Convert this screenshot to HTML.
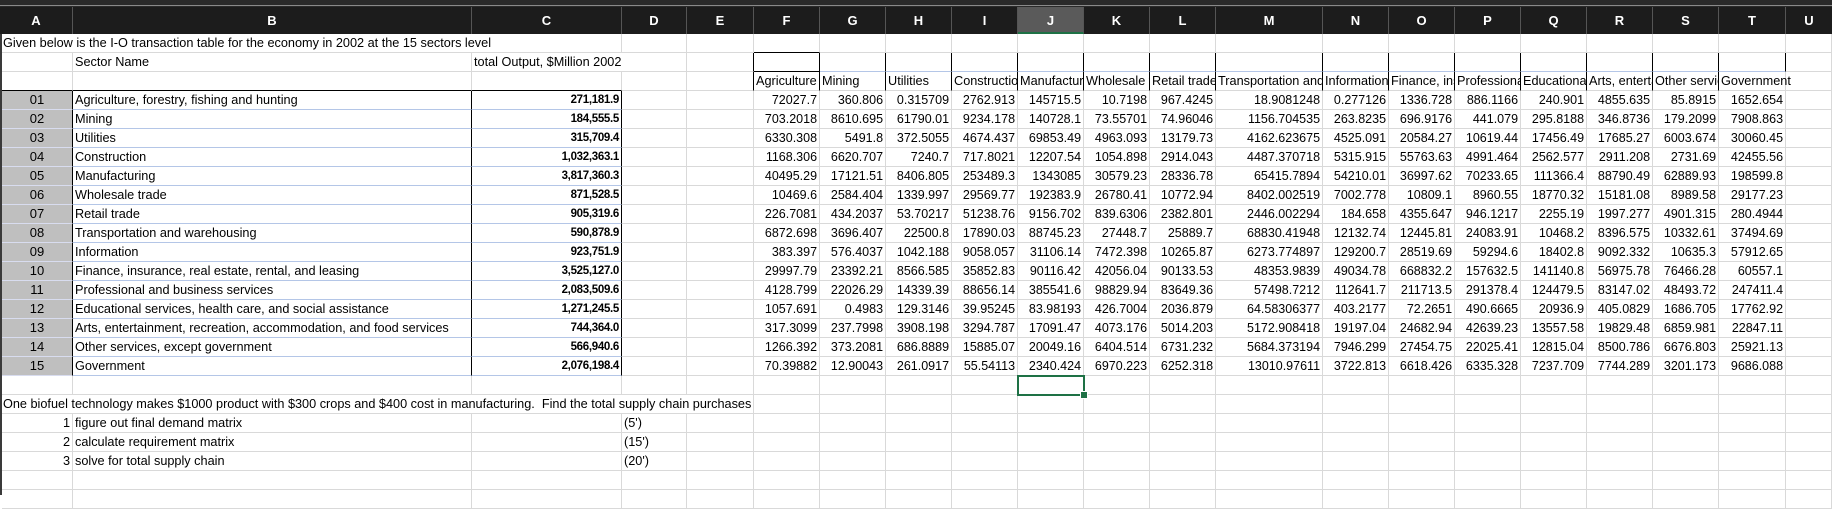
<!DOCTYPE html>
<html><head><meta charset="utf-8"><style>
body{margin:0;width:1832px;height:495px;overflow:hidden;background:#fff;position:relative;font-family:"Liberation Sans",sans-serif}
#top{position:absolute;left:0;top:0;width:1832px;height:7px;background:#2a2a2a;border-bottom:0}
#top i{position:absolute;left:0;top:5px;width:1832px;height:1px;background:#8a8a8a}
#hdr{position:absolute;left:0;top:7px;height:27px;width:1832px;background:#1c1c1c}
#hdr div{position:absolute;top:0;height:27px;line-height:27px;text-align:center;color:#fff;font-weight:bold;font-size:13px;border-right:1px solid #555;box-sizing:border-box}
#lft{position:absolute;left:0;top:34px;width:2px;height:461px;background:#3a3a3a}
table{position:absolute;left:2px;top:34px;border-collapse:separate;border-spacing:0;table-layout:fixed;width:1830px}
tr{height:19px}
td{height:18px;max-height:18px;padding:0 2px;line-height:18px;border-right:1px solid #d9d9d9;border-bottom:1px solid #d9d9d9;white-space:nowrap;overflow:hidden;font-size:12.5px;color:#000;box-sizing:content-box}
.t{font-size:12.7px;letter-spacing:0}
.r{text-align:right}
.b{font-weight:bold;font-size:11.5px;letter-spacing:-0.3px}
.a{background:#bfbfbf;text-align:center;border-right:1px solid #000;border-bottom:1px solid #d8dcef;font-size:13px}
.kr{border-right:1px solid #000}
.kb{border-bottom:1px solid #000}
.lb{border-bottom:1px solid #b4c6e7}
.ov{overflow:visible}
#sel{position:absolute;left:1017px;top:375px;width:64px;height:17px;border:2px solid #1e7145}
#sel i{position:absolute;right:-5px;bottom:-5px;width:6px;height:6px;background:#1e7145;border:1px solid #fff}
</style></head><body>
<div id="top"><i></i></div>
<div id="hdr">
<div style="left:0;width:73px">A</div>
<div style="left:73px;width:399px">B</div>
<div style="left:472px;width:150px">C</div>
<div style="left:622px;width:65px">D</div>
<div style="left:687px;width:67px">E</div>
<div style="left:754px;width:66px">F</div>
<div style="left:820px;width:66px">G</div>
<div style="left:886px;width:66px">H</div>
<div style="left:952px;width:66px">I</div>
<div style="left:1018px;width:66px;background:#5a5a5a;border-bottom:2px solid #1e7145">J</div>
<div style="left:1084px;width:66px">K</div>
<div style="left:1150px;width:66px">L</div>
<div style="left:1216px;width:107px">M</div>
<div style="left:1323px;width:66px">N</div>
<div style="left:1389px;width:66px">O</div>
<div style="left:1455px;width:66px">P</div>
<div style="left:1521px;width:66px">Q</div>
<div style="left:1587px;width:66px">R</div>
<div style="left:1653px;width:66px">S</div>
<div style="left:1719px;width:67px">T</div>
<div style="left:1786px;width:46px;border-right:0">U</div>
</div>
<div id="lft"></div>
<table>
<colgroup><col style="width:71px"><col style="width:399px"><col style="width:150px"><col style="width:65px"><col style="width:67px"><col style="width:66px"><col style="width:66px"><col style="width:66px"><col style="width:66px"><col style="width:66px"><col style="width:66px"><col style="width:66px"><col style="width:107px"><col style="width:66px"><col style="width:66px"><col style="width:66px"><col style="width:66px"><col style="width:66px"><col style="width:66px"><col style="width:67px"><col style="width:46px"></colgroup>
<tr><td colspan="3" class="t ov" style="padding-left:1px">Given below is the I-O transaction table for the economy in 2002 at the 15 sectors level</td><td></td><td></td><td class="kb"></td><td></td><td></td><td></td><td></td><td></td><td></td><td></td><td></td><td></td><td></td><td></td><td></td><td></td><td></td><td></td></tr>
<tr><td></td><td class="t">Sector Name</td><td colspan="2" class="t ov">total Output, $Million 2002</td><td class="kr"></td><td class="kr kb"></td><td class="kr lb"></td><td class="kr lb"></td><td class="kr lb"></td><td class="kr lb"></td><td class="kr lb"></td><td class="kr lb"></td><td class="kr lb"></td><td class="kr lb"></td><td class="kr lb"></td><td class="kr lb"></td><td class="kr lb"></td><td class="kr lb"></td><td class="kr lb"></td><td class="kr lb"></td><td></td></tr>
<tr><td class="kb"></td><td class="kb"></td><td class="kb"></td><td></td><td class="kr"></td><td class="kr t">Agriculture</td><td class="kr t">Mining</td><td class="kr t">Utilities</td><td class="kr t">Construction</td><td class="kr t">Manufacturing</td><td class="kr t">Wholesale trade</td><td class="kr t">Retail trade</td><td class="kr t">Transportation and warehousing</td><td class="kr t">Information</td><td class="kr t">Finance, insurance</td><td class="kr t">Professional</td><td class="kr t">Educational</td><td class="kr t">Arts, entertainment</td><td class="kr t">Other services</td><td class="t ov">Government</td><td></td></tr>
<tr><td class="a">01</td><td class="kr lb t">Agriculture, forestry, fishing and hunting</td><td class="r b kr lb">271,181.9</td><td></td><td></td><td class="r">72027.7</td><td class="r">360.806</td><td class="r">0.315709</td><td class="r">2762.913</td><td class="r">145715.5</td><td class="r">10.7198</td><td class="r">967.4245</td><td class="r">18.9081248</td><td class="r">0.277126</td><td class="r">1336.728</td><td class="r">886.1166</td><td class="r">240.901</td><td class="r">4855.635</td><td class="r">85.8915</td><td class="r">1652.654</td><td></td></tr>
<tr><td class="a">02</td><td class="kr lb t">Mining</td><td class="r b kr lb">184,555.5</td><td></td><td></td><td class="r">703.2018</td><td class="r">8610.695</td><td class="r">61790.01</td><td class="r">9234.178</td><td class="r">140728.1</td><td class="r">73.55701</td><td class="r">74.96046</td><td class="r">1156.704535</td><td class="r">263.8235</td><td class="r">696.9176</td><td class="r">441.079</td><td class="r">295.8188</td><td class="r">346.8736</td><td class="r">179.2099</td><td class="r">7908.863</td><td></td></tr>
<tr><td class="a">03</td><td class="kr lb t">Utilities</td><td class="r b kr lb">315,709.4</td><td></td><td></td><td class="r">6330.308</td><td class="r">5491.8</td><td class="r">372.5055</td><td class="r">4674.437</td><td class="r">69853.49</td><td class="r">4963.093</td><td class="r">13179.73</td><td class="r">4162.623675</td><td class="r">4525.091</td><td class="r">20584.27</td><td class="r">10619.44</td><td class="r">17456.49</td><td class="r">17685.27</td><td class="r">6003.674</td><td class="r">30060.45</td><td></td></tr>
<tr><td class="a">04</td><td class="kr lb t">Construction</td><td class="r b kr lb">1,032,363.1</td><td></td><td></td><td class="r">1168.306</td><td class="r">6620.707</td><td class="r">7240.7</td><td class="r">717.8021</td><td class="r">12207.54</td><td class="r">1054.898</td><td class="r">2914.043</td><td class="r">4487.370718</td><td class="r">5315.915</td><td class="r">55763.63</td><td class="r">4991.464</td><td class="r">2562.577</td><td class="r">2911.208</td><td class="r">2731.69</td><td class="r">42455.56</td><td></td></tr>
<tr><td class="a">05</td><td class="kr lb t">Manufacturing</td><td class="r b kr lb">3,817,360.3</td><td></td><td></td><td class="r">40495.29</td><td class="r">17121.51</td><td class="r">8406.805</td><td class="r">253489.3</td><td class="r">1343085</td><td class="r">30579.23</td><td class="r">28336.78</td><td class="r">65415.7894</td><td class="r">54210.01</td><td class="r">36997.62</td><td class="r">70233.65</td><td class="r">111366.4</td><td class="r">88790.49</td><td class="r">62889.93</td><td class="r">198599.8</td><td></td></tr>
<tr><td class="a">06</td><td class="kr lb t">Wholesale trade</td><td class="r b kr lb">871,528.5</td><td></td><td></td><td class="r">10469.6</td><td class="r">2584.404</td><td class="r">1339.997</td><td class="r">29569.77</td><td class="r">192383.9</td><td class="r">26780.41</td><td class="r">10772.94</td><td class="r">8402.002519</td><td class="r">7002.778</td><td class="r">10809.1</td><td class="r">8960.55</td><td class="r">18770.32</td><td class="r">15181.08</td><td class="r">8989.58</td><td class="r">29177.23</td><td></td></tr>
<tr><td class="a">07</td><td class="kr lb t">Retail trade</td><td class="r b kr lb">905,319.6</td><td></td><td></td><td class="r">226.7081</td><td class="r">434.2037</td><td class="r">53.70217</td><td class="r">51238.76</td><td class="r">9156.702</td><td class="r">839.6306</td><td class="r">2382.801</td><td class="r">2446.002294</td><td class="r">184.658</td><td class="r">4355.647</td><td class="r">946.1217</td><td class="r">2255.19</td><td class="r">1997.277</td><td class="r">4901.315</td><td class="r">280.4944</td><td></td></tr>
<tr><td class="a">08</td><td class="kr lb t">Transportation and warehousing</td><td class="r b kr lb">590,878.9</td><td></td><td></td><td class="r">6872.698</td><td class="r">3696.407</td><td class="r">22500.8</td><td class="r">17890.03</td><td class="r">88745.23</td><td class="r">27448.7</td><td class="r">25889.7</td><td class="r">68830.41948</td><td class="r">12132.74</td><td class="r">12445.81</td><td class="r">24083.91</td><td class="r">10468.2</td><td class="r">8396.575</td><td class="r">10332.61</td><td class="r">37494.69</td><td></td></tr>
<tr><td class="a">09</td><td class="kr lb t">Information</td><td class="r b kr lb">923,751.9</td><td></td><td></td><td class="r">383.397</td><td class="r">576.4037</td><td class="r">1042.188</td><td class="r">9058.057</td><td class="r">31106.14</td><td class="r">7472.398</td><td class="r">10265.87</td><td class="r">6273.774897</td><td class="r">129200.7</td><td class="r">28519.69</td><td class="r">59294.6</td><td class="r">18402.8</td><td class="r">9092.332</td><td class="r">10635.3</td><td class="r">57912.65</td><td></td></tr>
<tr><td class="a">10</td><td class="kr lb t">Finance, insurance, real estate, rental, and leasing</td><td class="r b kr lb">3,525,127.0</td><td></td><td></td><td class="r">29997.79</td><td class="r">23392.21</td><td class="r">8566.585</td><td class="r">35852.83</td><td class="r">90116.42</td><td class="r">42056.04</td><td class="r">90133.53</td><td class="r">48353.9839</td><td class="r">49034.78</td><td class="r">668832.2</td><td class="r">157632.5</td><td class="r">141140.8</td><td class="r">56975.78</td><td class="r">76466.28</td><td class="r">60557.1</td><td></td></tr>
<tr><td class="a">11</td><td class="kr lb t">Professional and business services</td><td class="r b kr lb">2,083,509.6</td><td></td><td></td><td class="r">4128.799</td><td class="r">22026.29</td><td class="r">14339.39</td><td class="r">88656.14</td><td class="r">385541.6</td><td class="r">98829.94</td><td class="r">83649.36</td><td class="r">57498.7212</td><td class="r">112641.7</td><td class="r">211713.5</td><td class="r">291378.4</td><td class="r">124479.5</td><td class="r">83147.02</td><td class="r">48493.72</td><td class="r">247411.4</td><td></td></tr>
<tr><td class="a">12</td><td class="kr lb t">Educational services, health care, and social assistance</td><td class="r b kr lb">1,271,245.5</td><td></td><td></td><td class="r">1057.691</td><td class="r">0.4983</td><td class="r">129.3146</td><td class="r">39.95245</td><td class="r">83.98193</td><td class="r">426.7004</td><td class="r">2036.879</td><td class="r">64.58306377</td><td class="r">403.2177</td><td class="r">72.2651</td><td class="r">490.6665</td><td class="r">20936.9</td><td class="r">405.0829</td><td class="r">1686.705</td><td class="r">17762.92</td><td></td></tr>
<tr><td class="a">13</td><td class="kr lb t">Arts, entertainment, recreation, accommodation, and food services</td><td class="r b kr lb">744,364.0</td><td></td><td></td><td class="r">317.3099</td><td class="r">237.7998</td><td class="r">3908.198</td><td class="r">3294.787</td><td class="r">17091.47</td><td class="r">4073.176</td><td class="r">5014.203</td><td class="r">5172.908418</td><td class="r">19197.04</td><td class="r">24682.94</td><td class="r">42639.23</td><td class="r">13557.58</td><td class="r">19829.48</td><td class="r">6859.981</td><td class="r">22847.11</td><td></td></tr>
<tr><td class="a">14</td><td class="kr lb t">Other services, except government</td><td class="r b kr lb">566,940.6</td><td></td><td></td><td class="r">1266.392</td><td class="r">373.2081</td><td class="r">686.8889</td><td class="r">15885.07</td><td class="r">20049.16</td><td class="r">6404.514</td><td class="r">6731.232</td><td class="r">5684.373194</td><td class="r">7946.299</td><td class="r">27454.75</td><td class="r">22025.41</td><td class="r">12815.04</td><td class="r">8500.786</td><td class="r">6676.803</td><td class="r">25921.13</td><td></td></tr>
<tr><td class="a">15</td><td class="kr lb t">Government</td><td class="r b kr lb">2,076,198.4</td><td></td><td></td><td class="r">70.39882</td><td class="r">12.90043</td><td class="r">261.0917</td><td class="r">55.54113</td><td class="r">2340.424</td><td class="r">6970.223</td><td class="r">6252.318</td><td class="r">13010.97611</td><td class="r">3722.813</td><td class="r">6618.426</td><td class="r">6335.328</td><td class="r">7237.709</td><td class="r">7744.289</td><td class="r">3201.173</td><td class="r">9686.088</td><td></td></tr>
<tr><td></td><td></td><td></td><td></td><td></td><td></td><td></td><td></td><td></td><td></td><td></td><td></td><td></td><td></td><td></td><td></td><td></td><td></td><td></td><td></td><td></td></tr>
<tr><td colspan="5" class="t ov" style="padding-left:1px">One biofuel technology makes $1000 product with $300 crops and $400 cost in manufacturing.&nbsp; Find the total supply chain purchases</td><td></td><td></td><td></td><td></td><td></td><td></td><td></td><td></td><td></td><td></td><td></td><td></td><td></td><td></td><td></td><td></td></tr>
<tr><td class="r t">1</td><td class="t">figure out final demand matrix</td><td></td><td class="t">(5')</td><td></td><td></td><td></td><td></td><td></td><td></td><td></td><td></td><td></td><td></td><td></td><td></td><td></td><td></td><td></td><td></td><td></td></tr>
<tr><td class="r t">2</td><td class="t">calculate requirement matrix</td><td></td><td class="t">(15')</td><td></td><td></td><td></td><td></td><td></td><td></td><td></td><td></td><td></td><td></td><td></td><td></td><td></td><td></td><td></td><td></td><td></td></tr>
<tr><td class="r t">3</td><td class="t">solve for total supply chain</td><td></td><td class="t">(20')</td><td></td><td></td><td></td><td></td><td></td><td></td><td></td><td></td><td></td><td></td><td></td><td></td><td></td><td></td><td></td><td></td><td></td></tr>
<tr><td></td><td></td><td></td><td></td><td></td><td></td><td></td><td></td><td></td><td></td><td></td><td></td><td></td><td></td><td></td><td></td><td></td><td></td><td></td><td></td><td></td></tr>
<tr><td></td><td></td><td></td><td></td><td></td><td></td><td></td><td></td><td></td><td></td><td></td><td></td><td></td><td></td><td></td><td></td><td></td><td></td><td></td><td></td><td></td></tr>
</table>
<div id="sel"><i></i></div>
</body></html>
